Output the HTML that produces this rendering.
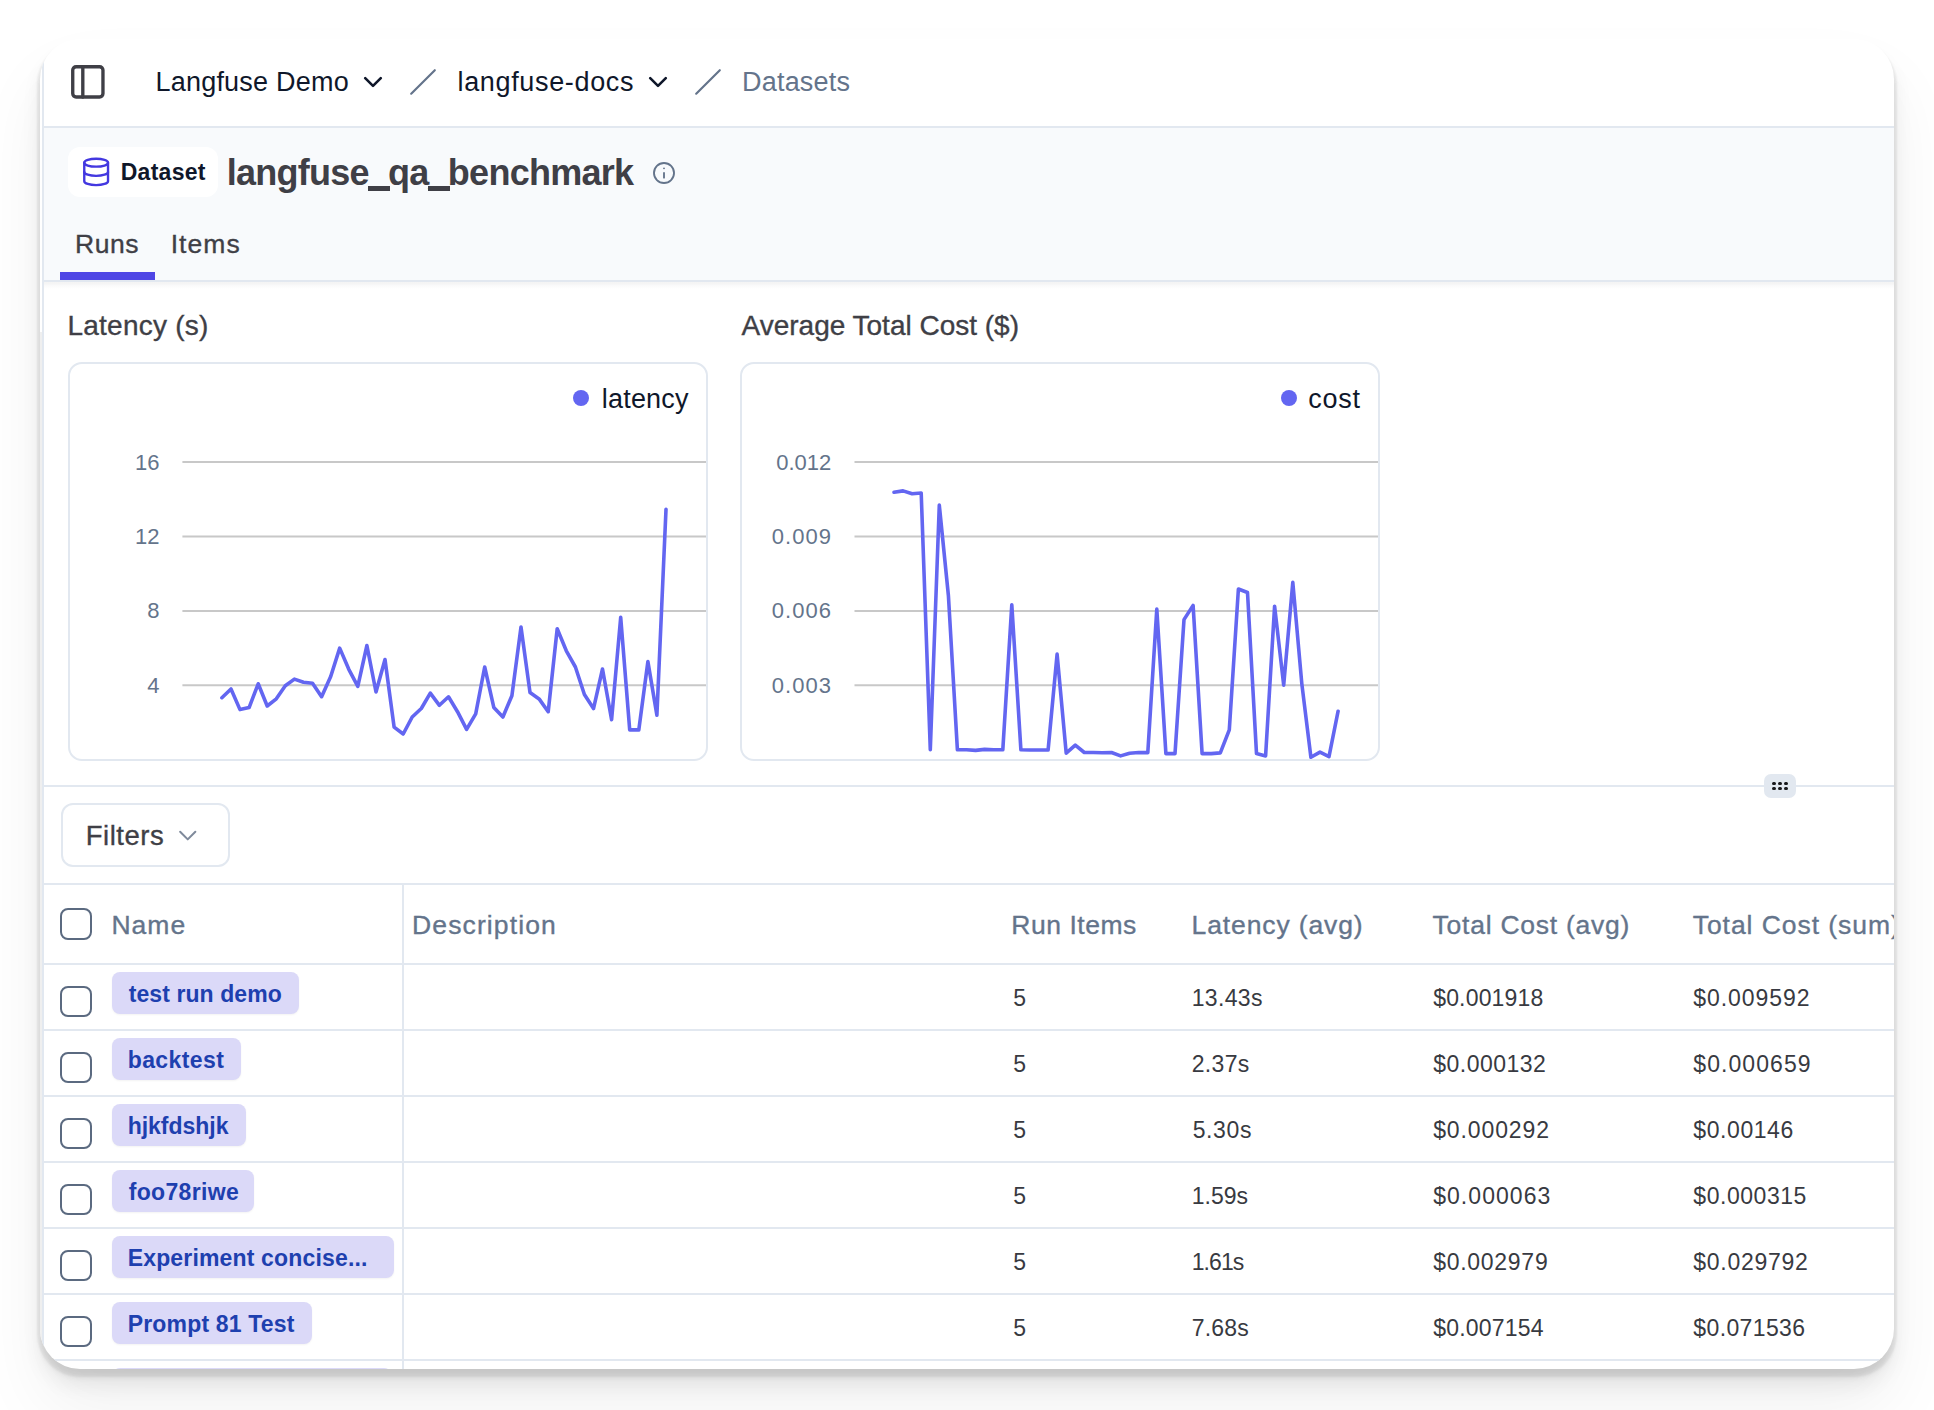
<!DOCTYPE html>
<html><head><meta charset="utf-8"><style>
html,body{margin:0;padding:0;background:#fff;width:1934px;height:1410px;overflow:hidden}
#card{position:absolute;left:40px;top:39px;width:1854px;height:1330px;border-radius:40px;overflow:hidden;background:#fff;
 box-shadow:0 5px 2px 3px rgba(0,0,0,.05),0 8px 6px rgba(0,0,0,.07),0 16px 20px rgba(0,0,0,.07),0 40px 70px rgba(0,0,0,.06)}
#inner{position:absolute;left:-40px;top:-39px;width:1934px;height:1410px}
#lb{position:absolute;left:42px;top:0;width:2px;height:1410px;background:#e2e8f0}
.t{position:absolute;white-space:nowrap;font-family:"Liberation Sans",sans-serif}
.b{position:absolute}
</style></head><body>
<div id="card"><div id="inner">
<div class="b" style="left:42px;top:126px;width:1860px;height:2px;background:#e2e8f0"></div>
<svg class="b" style="left:67px;top:61px" width="40.3" height="40.3" viewBox="-0.417 -0.417 24 24" fill="none" stroke="#3f3f46" stroke-width="2" stroke-linecap="round" stroke-linejoin="round"><rect width="18" height="18" x="3" y="3" rx="2"/><path d="M9 3v18"/></svg>
<div class="t" style="left:155.40px;top:69.14px;font-size:27px;line-height:27px;color:#0f172a;font-weight:400;letter-spacing:0.233px;">Langfuse Demo</div>
<svg class="b" style="left:357px;top:66px" width="31.2" height="31.2" viewBox="-0.308 -0.308 24 24" fill="none" stroke="#0f172a" stroke-width="2" stroke-linecap="round" stroke-linejoin="round"><path d="m6 9 6 6 6-6"/></svg>
<svg class="b" style="left:0;top:0" width="1934" height="140"><line x1="411.2" y1="93.7" x2="434.8" y2="70.2" stroke="#64748b" stroke-width="2.2" stroke-linecap="round"/></svg>
<div class="t" style="left:457.50px;top:69.14px;font-size:27px;line-height:27px;color:#0f172a;font-weight:400;letter-spacing:0.658px;">langfuse-docs</div>
<svg class="b" style="left:642px;top:66px" width="31.2" height="31.2" viewBox="-0.308 -0.308 24 24" fill="none" stroke="#0f172a" stroke-width="2" stroke-linecap="round" stroke-linejoin="round"><path d="m6 9 6 6 6-6"/></svg>
<svg class="b" style="left:0;top:0" width="1934" height="140"><line x1="696.2" y1="93.7" x2="719.8" y2="70.2" stroke="#64748b" stroke-width="2.2" stroke-linecap="round"/></svg>
<div class="t" style="left:742.00px;top:69.14px;font-size:27px;line-height:27px;color:#64748b;font-weight:400;letter-spacing:0.207px;">Datasets</div>
<div class="b" style="left:42px;top:128px;width:1860px;height:152px;background:#f8fafc"></div>
<div class="b" style="left:42px;top:280px;width:1860px;height:2px;background:#e2e8f0"></div>
<div class="b" style="left:42px;top:282px;width:1860px;height:7px;background:linear-gradient(#f4f4f4 0,#f5f5f5 2px,#f9f9fa 3px,#fcfcfc 5px,#fff 7px)"></div>
<div class="b" style="left:68px;top:147px;width:150px;height:50px;background:#fff;border-radius:12px"></div>
<svg class="b" style="left:80px;top:156px" width="31.7" height="31.7" viewBox="-0.227 -0.076 24 24" fill="none" stroke="#4338e0" stroke-width="1.8" stroke-linecap="round" stroke-linejoin="round"><ellipse cx="12" cy="5" rx="9" ry="3"/><path d="M3 5V19A9 3 0 0 0 21 19V5"/><path d="M3 12A9 3 0 0 0 21 12"/></svg>
<div class="t" style="left:120.70px;top:160.53px;font-size:23px;line-height:23px;color:#0f172a;font-weight:700;letter-spacing:0.277px;">Dataset</div>
<div class="t" style="left:226.70px;top:154.72px;font-size:36px;line-height:36px;color:#3f3f46;font-weight:700;letter-spacing:-0.742px;">langfuse_qa_benchmark</div>
<div class="b" style="left:368.2px;top:186.4px;width:21.4px;height:4.2px;background:#3f3f46"></div>
<div class="b" style="left:428.4px;top:186.4px;width:21.2px;height:4.2px;background:#3f3f46"></div>
<svg class="b" style="left:650px;top:159px" width="28" height="28" viewBox="0 0 24 24" fill="none" stroke="#64748b" stroke-width="1.6" stroke-linecap="round" stroke-linejoin="round"><circle cx="12" cy="12" r="8.6"/><path d="M12 16v-4"/><path d="M12 8h.01"/></svg>
<div class="t" style="left:75.10px;top:230.56px;font-size:26.5px;line-height:26.5px;color:#3f3f46;font-weight:400;letter-spacing:0.495px;-webkit-text-stroke:0.35px currentColor">Runs</div>
<div class="t" style="left:170.70px;top:230.56px;font-size:26.5px;line-height:26.5px;color:#3f3f46;font-weight:400;letter-spacing:1.066px;-webkit-text-stroke:0.35px currentColor">Items</div>
<div class="b" style="left:60px;top:272px;width:95px;height:8px;background:#4f46e5"></div>
<div class="t" style="left:67.50px;top:312.49px;font-size:28px;line-height:28px;color:#3f3f46;font-weight:400;letter-spacing:0.233px;-webkit-text-stroke:0.35px currentColor">Latency (s)</div>
<div class="b" style="left:68px;top:362px;width:640px;height:399px;border:2px solid #e2e8f0;border-radius:14px;box-sizing:border-box"></div>
<div class="b" style="left:572.9px;top:390px;width:16px;height:16px;background:#6366f1;border-radius:50%"></div>
<div class="t" style="left:601.80px;top:386.34px;font-size:27px;line-height:27px;color:#0f172a;font-weight:400;letter-spacing:0.192px;">latency</div>
<svg class="b" style="left:0;top:0" width="1934" height="800"><defs><clipPath id="c68"><rect x="70" y="364" width="636" height="395" rx="12"/></clipPath></defs><line x1="182.4" y1="462.1" x2="706" y2="462.1" stroke="#c8c8c8" stroke-width="2"/><line x1="182.4" y1="536.5" x2="706" y2="536.5" stroke="#c8c8c8" stroke-width="2"/><line x1="182.4" y1="610.9" x2="706" y2="610.9" stroke="#c8c8c8" stroke-width="2"/><line x1="182.4" y1="685.2" x2="706" y2="685.2" stroke="#c8c8c8" stroke-width="2"/><polyline clip-path="url(#c68)" points="221.9,697.7 231.0,689.0 240.0,709.6 249.1,707.6 258.2,683.8 267.2,706.0 276.3,698.8 285.3,685.8 294.4,679.1 303.5,682.2 312.5,683.3 321.6,696.7 330.7,676.5 339.7,648.1 348.8,669.3 357.8,686.4 366.9,645.5 376.0,692.0 385.0,659.5 394.1,727.1 403.2,734.0 412.2,717.0 421.3,708.5 430.3,693.1 439.4,705.3 448.5,696.8 457.5,711.7 466.6,729.3 475.7,713.8 484.7,667.0 493.8,707.4 502.9,717.0 511.9,695.7 521.0,627.1 530.0,692.6 539.1,698.9 548.2,711.7 557.2,628.7 566.3,650.8 575.4,667.0 584.4,694.5 593.5,708.6 602.5,669.0 611.6,719.7 620.7,617.3 629.7,729.9 638.8,729.9 647.9,661.6 656.9,715.1 666.0,509.4" fill="none" stroke="#6366f1" stroke-width="3.6" stroke-linejoin="round" stroke-linecap="round"/></svg>
<div class="t" style="left:135.06px;top:451.57px;font-size:22px;line-height:22px;color:#64748b;font-weight:400;letter-spacing:0.000px;">16</div>
<div class="t" style="left:135.06px;top:525.97px;font-size:22px;line-height:22px;color:#64748b;font-weight:400;letter-spacing:0.000px;">12</div>
<div class="t" style="left:147.30px;top:600.37px;font-size:22px;line-height:22px;color:#64748b;font-weight:400;letter-spacing:0.000px;">8</div>
<div class="t" style="left:147.30px;top:674.67px;font-size:22px;line-height:22px;color:#64748b;font-weight:400;letter-spacing:0.000px;">4</div>
<div class="t" style="left:741.50px;top:312.49px;font-size:28px;line-height:28px;color:#3f3f46;font-weight:400;letter-spacing:-0.002px;-webkit-text-stroke:0.35px currentColor">Average Total Cost ($)</div>
<div class="b" style="left:740px;top:362px;width:640px;height:399px;border:2px solid #e2e8f0;border-radius:14px;box-sizing:border-box"></div>
<div class="b" style="left:1281px;top:390px;width:16px;height:16px;background:#6366f1;border-radius:50%"></div>
<div class="t" style="left:1308.20px;top:386.34px;font-size:27px;line-height:27px;color:#0f172a;font-weight:400;letter-spacing:0.761px;">cost</div>
<svg class="b" style="left:0;top:0" width="1934" height="800"><defs><clipPath id="c740"><rect x="742" y="364" width="636" height="395" rx="12"/></clipPath></defs><line x1="854.5" y1="462.1" x2="1378" y2="462.1" stroke="#c8c8c8" stroke-width="2"/><line x1="854.5" y1="536.5" x2="1378" y2="536.5" stroke="#c8c8c8" stroke-width="2"/><line x1="854.5" y1="610.9" x2="1378" y2="610.9" stroke="#c8c8c8" stroke-width="2"/><line x1="854.5" y1="685.2" x2="1378" y2="685.2" stroke="#c8c8c8" stroke-width="2"/><polyline clip-path="url(#c740)" points="894.0,492.3 903.1,490.9 912.1,493.8 921.2,493.0 930.3,749.8 939.3,505.1 948.4,595.5 957.4,749.8 966.5,749.8 975.6,750.4 984.6,749.4 993.7,749.8 1002.8,749.8 1011.8,604.9 1020.9,749.8 1029.9,750.0 1039.0,750.0 1048.1,750.0 1057.1,654.1 1066.2,753.2 1075.3,745.1 1084.3,752.5 1093.4,752.5 1102.4,752.8 1111.5,752.5 1120.6,755.9 1129.6,753.2 1138.7,752.5 1147.8,752.6 1156.8,609.1 1165.9,753.6 1175.0,753.6 1184.0,619.6 1193.1,605.4 1202.1,753.6 1211.2,753.6 1220.3,752.9 1229.3,729.8 1238.4,589.0 1247.5,592.5 1256.5,753.6 1265.6,755.9 1274.6,606.2 1283.7,685.1 1292.8,582.3 1301.8,683.6 1310.9,757.3 1320.0,752.1 1329.0,756.6 1338.1,711.2" fill="none" stroke="#6366f1" stroke-width="3.6" stroke-linejoin="round" stroke-linecap="round"/></svg>
<div class="t" style="left:776.18px;top:451.57px;font-size:22px;line-height:22px;color:#64748b;font-weight:400;letter-spacing:0.000px;">0.012</div>
<div class="t" style="left:771.70px;top:525.97px;font-size:22px;line-height:22px;color:#64748b;font-weight:400;letter-spacing:1.070px;">0.009</div>
<div class="t" style="left:771.70px;top:600.37px;font-size:22px;line-height:22px;color:#64748b;font-weight:400;letter-spacing:1.070px;">0.006</div>
<div class="t" style="left:771.70px;top:674.67px;font-size:22px;line-height:22px;color:#64748b;font-weight:400;letter-spacing:1.070px;">0.003</div>
<div class="b" style="left:42px;top:785px;width:1860px;height:2px;background:#e2e8f0"></div>
<div class="b" style="left:1764px;top:774px;width:32px;height:24px;background:#e2e8f0;border-radius:7px"></div>
<div class="b" style="left:1772.1px;top:781.6px;width:3.8px;height:3.8px;background:#18181b;border-radius:50%"></div>
<div class="b" style="left:1772.1px;top:786.6px;width:3.8px;height:3.8px;background:#18181b;border-radius:50%"></div>
<div class="b" style="left:1778.1px;top:781.6px;width:3.8px;height:3.8px;background:#18181b;border-radius:50%"></div>
<div class="b" style="left:1778.1px;top:786.6px;width:3.8px;height:3.8px;background:#18181b;border-radius:50%"></div>
<div class="b" style="left:1784.0px;top:781.6px;width:3.8px;height:3.8px;background:#18181b;border-radius:50%"></div>
<div class="b" style="left:1784.0px;top:786.6px;width:3.8px;height:3.8px;background:#18181b;border-radius:50%"></div>
<div class="b" style="left:61px;top:803px;width:169px;height:64px;border:2px solid #e2e8f0;border-radius:12px;box-sizing:border-box"></div>
<div class="t" style="left:85.70px;top:821.92px;font-size:27.5px;line-height:27.5px;color:#3f3f46;font-weight:400;letter-spacing:0.515px;-webkit-text-stroke:0.35px currentColor">Filters</div>
<svg class="b" style="left:172px;top:820px" width="30.4" height="30.4" viewBox="-0.434 -0.316 24 24" fill="none" stroke="#7f8a9b" stroke-width="1.6" stroke-linecap="round" stroke-linejoin="round"><path d="m6 9 6 6 6-6"/></svg>
<div class="b" style="left:42px;top:883px;width:1860px;height:2px;background:#e2e8f0"></div>
<div class="b" style="left:402px;top:885px;width:2px;height:500px;background:#e2e8f0"></div>
<div class="b" style="left:42px;top:963px;width:1860px;height:2px;background:#e2e8f0"></div>
<div class="b" style="left:60.3px;top:908px;width:31.5px;height:31.5px;border:2px solid #5b6a80;border-radius:8px;box-sizing:border-box"></div>
<div class="t" style="left:111.40px;top:911.56px;font-size:26.5px;line-height:26.5px;color:#64748b;font-weight:400;letter-spacing:1.017px;-webkit-text-stroke:0.35px currentColor">Name</div>
<div class="t" style="left:412.00px;top:911.56px;font-size:26.5px;line-height:26.5px;color:#64748b;font-weight:400;letter-spacing:1.129px;-webkit-text-stroke:0.35px currentColor">Description</div>
<div class="t" style="left:1011.30px;top:911.56px;font-size:26.5px;line-height:26.5px;color:#64748b;font-weight:400;letter-spacing:0.536px;-webkit-text-stroke:0.35px currentColor">Run Items</div>
<div class="t" style="left:1191.60px;top:911.56px;font-size:26.5px;line-height:26.5px;color:#64748b;font-weight:400;letter-spacing:0.873px;-webkit-text-stroke:0.35px currentColor">Latency (avg)</div>
<div class="t" style="left:1432.60px;top:911.56px;font-size:26.5px;line-height:26.5px;color:#64748b;font-weight:400;letter-spacing:0.751px;-webkit-text-stroke:0.35px currentColor">Total Cost (avg)</div>
<div class="t" style="left:1692.70px;top:911.56px;font-size:26.5px;line-height:26.5px;color:#64748b;font-weight:400;letter-spacing:0.948px;-webkit-text-stroke:0.35px currentColor">Total Cost (sum)</div>
<div class="b" style="left:42px;top:1029px;width:1860px;height:2px;background:#e2e8f0"></div>
<div class="b" style="left:60.3px;top:985.6px;width:31.5px;height:31.5px;border:2px solid #5b6a80;border-radius:8px;box-sizing:border-box"></div>
<div class="b" style="left:112px;top:972px;width:187px;height:41.6px;background:#dbd9f8;border-radius:8px;box-shadow:0 1px 2px rgba(0,0,0,.05)"></div>
<div class="t" style="left:128.70px;top:982.53px;font-size:23px;line-height:23px;color:#1e40af;font-weight:700;letter-spacing:0.090px;">test run demo</div>
<div class="t" style="left:1013.30px;top:987.43px;font-size:23px;line-height:23px;color:#383a41;font-weight:400;letter-spacing:0.000px;">5</div>
<div class="t" style="left:1191.70px;top:987.43px;font-size:23px;line-height:23px;color:#383a41;font-weight:400;letter-spacing:0.329px;">13.43s</div>
<div class="t" style="left:1433.20px;top:987.43px;font-size:23px;line-height:23px;color:#383a41;font-weight:400;letter-spacing:0.171px;">$0.001918</div>
<div class="t" style="left:1693.30px;top:987.43px;font-size:23px;line-height:23px;color:#383a41;font-weight:400;letter-spacing:0.946px;">$0.009592</div>
<div class="b" style="left:42px;top:1095px;width:1860px;height:2px;background:#e2e8f0"></div>
<div class="b" style="left:60.3px;top:1051.6px;width:31.5px;height:31.5px;border:2px solid #5b6a80;border-radius:8px;box-sizing:border-box"></div>
<div class="b" style="left:112px;top:1038px;width:128.7px;height:41.6px;background:#dbd9f8;border-radius:8px;box-shadow:0 1px 2px rgba(0,0,0,.05)"></div>
<div class="t" style="left:127.70px;top:1048.53px;font-size:23px;line-height:23px;color:#1e40af;font-weight:700;letter-spacing:0.419px;">backtest</div>
<div class="t" style="left:1013.30px;top:1053.43px;font-size:23px;line-height:23px;color:#383a41;font-weight:400;letter-spacing:0.000px;">5</div>
<div class="t" style="left:1191.70px;top:1053.43px;font-size:23px;line-height:23px;color:#383a41;font-weight:400;letter-spacing:0.334px;">2.37s</div>
<div class="t" style="left:1433.20px;top:1053.43px;font-size:23px;line-height:23px;color:#383a41;font-weight:400;letter-spacing:0.496px;">$0.000132</div>
<div class="t" style="left:1693.30px;top:1053.43px;font-size:23px;line-height:23px;color:#383a41;font-weight:400;letter-spacing:1.071px;">$0.000659</div>
<div class="b" style="left:42px;top:1161px;width:1860px;height:2px;background:#e2e8f0"></div>
<div class="b" style="left:60.3px;top:1117.6px;width:31.5px;height:31.5px;border:2px solid #5b6a80;border-radius:8px;box-sizing:border-box"></div>
<div class="b" style="left:112px;top:1104px;width:133.8px;height:41.6px;background:#dbd9f8;border-radius:8px;box-shadow:0 1px 2px rgba(0,0,0,.05)"></div>
<div class="t" style="left:127.70px;top:1114.53px;font-size:23px;line-height:23px;color:#1e40af;font-weight:700;letter-spacing:-0.021px;">hjkfdshjk</div>
<div class="t" style="left:1013.30px;top:1119.43px;font-size:23px;line-height:23px;color:#383a41;font-weight:400;letter-spacing:0.000px;">5</div>
<div class="t" style="left:1192.70px;top:1119.43px;font-size:23px;line-height:23px;color:#383a41;font-weight:400;letter-spacing:0.609px;">5.30s</div>
<div class="t" style="left:1433.20px;top:1119.43px;font-size:23px;line-height:23px;color:#383a41;font-weight:400;letter-spacing:0.884px;">$0.000292</div>
<div class="t" style="left:1693.30px;top:1119.43px;font-size:23px;line-height:23px;color:#383a41;font-weight:400;letter-spacing:0.580px;">$0.00146</div>
<div class="b" style="left:42px;top:1227px;width:1860px;height:2px;background:#e2e8f0"></div>
<div class="b" style="left:60.3px;top:1183.6px;width:31.5px;height:31.5px;border:2px solid #5b6a80;border-radius:8px;box-sizing:border-box"></div>
<div class="b" style="left:112px;top:1170px;width:142.3px;height:41.6px;background:#dbd9f8;border-radius:8px;box-shadow:0 1px 2px rgba(0,0,0,.05)"></div>
<div class="t" style="left:128.70px;top:1180.53px;font-size:23px;line-height:23px;color:#1e40af;font-weight:700;letter-spacing:0.341px;">foo78riwe</div>
<div class="t" style="left:1013.30px;top:1185.43px;font-size:23px;line-height:23px;color:#383a41;font-weight:400;letter-spacing:0.000px;">5</div>
<div class="t" style="left:1191.70px;top:1185.43px;font-size:23px;line-height:23px;color:#383a41;font-weight:400;letter-spacing:0.009px;">1.59s</div>
<div class="t" style="left:1433.20px;top:1185.43px;font-size:23px;line-height:23px;color:#383a41;font-weight:400;letter-spacing:1.046px;">$0.000063</div>
<div class="t" style="left:1693.30px;top:1185.43px;font-size:23px;line-height:23px;color:#383a41;font-weight:400;letter-spacing:0.546px;">$0.000315</div>
<div class="b" style="left:42px;top:1293px;width:1860px;height:2px;background:#e2e8f0"></div>
<div class="b" style="left:60.3px;top:1249.6px;width:31.5px;height:31.5px;border:2px solid #5b6a80;border-radius:8px;box-sizing:border-box"></div>
<div class="b" style="left:112px;top:1236px;width:281.9px;height:41.6px;background:#dbd9f8;border-radius:8px;box-shadow:0 1px 2px rgba(0,0,0,.05)"></div>
<div class="t" style="left:127.70px;top:1246.53px;font-size:23px;line-height:23px;color:#1e40af;font-weight:700;letter-spacing:0.161px;">Experiment concise...</div>
<div class="t" style="left:1013.30px;top:1251.43px;font-size:23px;line-height:23px;color:#383a41;font-weight:400;letter-spacing:0.000px;">5</div>
<div class="t" style="left:1191.70px;top:1251.43px;font-size:23px;line-height:23px;color:#383a41;font-weight:400;letter-spacing:-0.916px;">1.61s</div>
<div class="t" style="left:1433.20px;top:1251.43px;font-size:23px;line-height:23px;color:#383a41;font-weight:400;letter-spacing:0.721px;">$0.002979</div>
<div class="t" style="left:1693.30px;top:1251.43px;font-size:23px;line-height:23px;color:#383a41;font-weight:400;letter-spacing:0.709px;">$0.029792</div>
<div class="b" style="left:42px;top:1359px;width:1860px;height:2px;background:#e2e8f0"></div>
<div class="b" style="left:60.3px;top:1315.6px;width:31.5px;height:31.5px;border:2px solid #5b6a80;border-radius:8px;box-sizing:border-box"></div>
<div class="b" style="left:112px;top:1302px;width:199.60000000000002px;height:41.6px;background:#dbd9f8;border-radius:8px;box-shadow:0 1px 2px rgba(0,0,0,.05)"></div>
<div class="t" style="left:127.70px;top:1312.53px;font-size:23px;line-height:23px;color:#1e40af;font-weight:700;letter-spacing:0.178px;">Prompt 81 Test</div>
<div class="t" style="left:1013.30px;top:1317.43px;font-size:23px;line-height:23px;color:#383a41;font-weight:400;letter-spacing:0.000px;">5</div>
<div class="t" style="left:1191.70px;top:1317.43px;font-size:23px;line-height:23px;color:#383a41;font-weight:400;letter-spacing:0.184px;">7.68s</div>
<div class="t" style="left:1433.20px;top:1317.43px;font-size:23px;line-height:23px;color:#383a41;font-weight:400;letter-spacing:0.209px;">$0.007154</div>
<div class="t" style="left:1693.30px;top:1317.43px;font-size:23px;line-height:23px;color:#383a41;font-weight:400;letter-spacing:0.384px;">$0.071536</div>
<div class="b" style="left:42px;top:1425px;width:1860px;height:2px;background:#e2e8f0"></div>
<div class="b" style="left:60.3px;top:1381.6px;width:31.5px;height:31.5px;border:2px solid #5b6a80;border-radius:8px;box-sizing:border-box"></div>
<div class="b" style="left:112px;top:1368px;width:279.6px;height:41.6px;background:#dbd9f8;border-radius:8px;box-shadow:0 1px 2px rgba(0,0,0,.05)"></div>
<div class="t" style="left:127.70px;top:1378.53px;font-size:23px;line-height:23px;color:#1e40af;font-weight:700;letter-spacing:0.161px;">Experiment concise...</div>
<div id="lb"></div><div style="position:absolute;left:40px;top:332px;width:2px;height:1100px;background:#efefef"></div>
</div></div>
</body></html>
